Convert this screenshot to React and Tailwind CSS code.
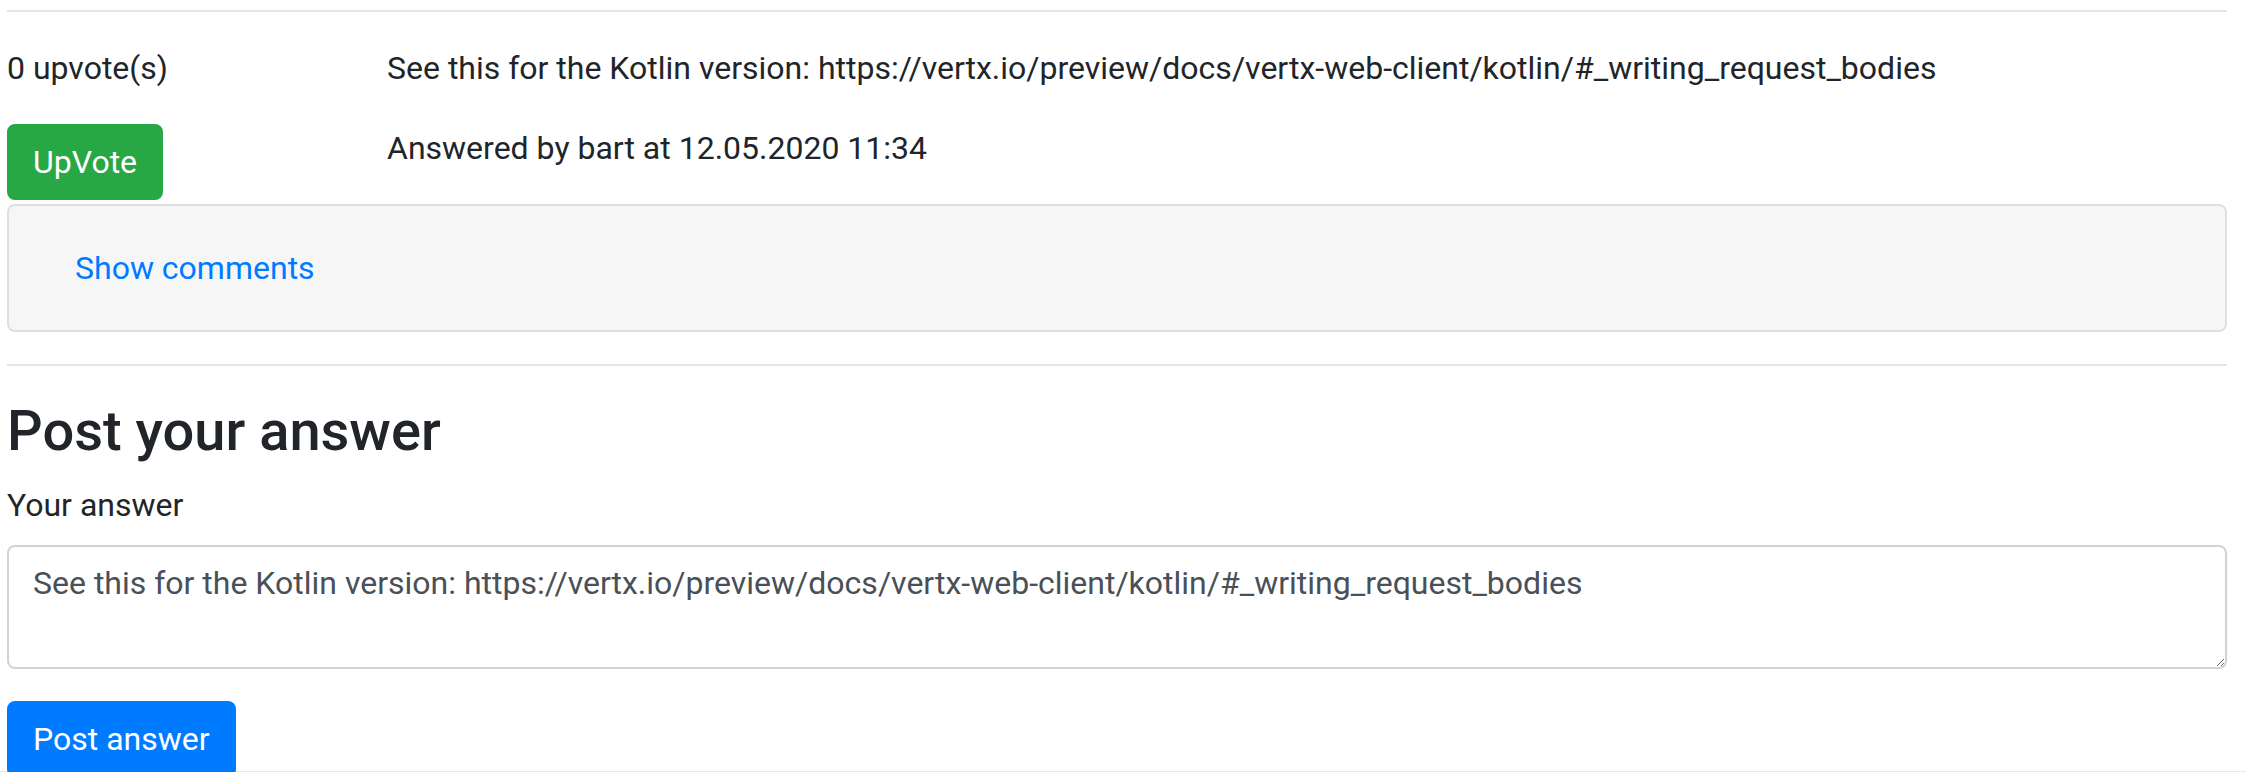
export default function App() {
  const answer =
    'See this for the Kotlin version: https://vertx.io/preview/docs/vertx-web-client/kotlin/#_writing_request_bodies';

  return (
    <div className="h-[772px] overflow-hidden bg-white pl-[7px] pr-[19px] font-['Roboto',_'Liberation_Sans',sans-serif] text-[32px] leading-[1.5] text-[#212529] shadow-[inset_0_-1px_0_#e9e9e9]">
      <hr className="mt-[10px] mb-8 border-0 border-t-2 border-[#e5e5e5]" />

      <div className="grid grid-cols-[380px_1fr]">
        <div>
          <p className="mb-8">0 upvote(s)</p>
          <button className="rounded-lg border-2 border-[#28a745] bg-[#28a745] px-6 py-3 leading-[1.5] text-white">
            UpVote
          </button>
        </div>
        <div>
          <p className="mb-8">{answer}</p>
          <p className="mb-8">Answered by bart at 12.05.2020 11:34</p>
        </div>
      </div>

      <div className="rounded-lg border-2 border-[#dfdfdf] bg-[#f6f6f6] px-10 py-6">
        <button className="border-2 border-transparent px-6 py-3 leading-[1.5] text-[#007bff]">
          Show comments
        </button>
      </div>

      <hr className="my-8 border-0 border-t-2 border-[#e5e5e5]" />

      <h3 className="mb-4 text-[56px] font-medium leading-[1.2]">Post your answer</h3>

      <form>
        <div className="mb-8">
          <label className="mb-4 block">Your answer</label>
          <textarea
            rows={2}
            readOnly
            defaultValue={answer}
            className="block h-[124px] w-full rounded-lg border-2 border-[#ced4da] bg-white px-6 py-3 leading-[1.5] text-[#495057] outline-none"
          />
        </div>
        <button
          type="button"
          className="relative rounded-lg border-2 border-[#007bff] bg-[#007bff] px-6 py-3 leading-[1.5] text-white"
        >
          Post answer
        </button>
      </form>
    </div>
  );
}
